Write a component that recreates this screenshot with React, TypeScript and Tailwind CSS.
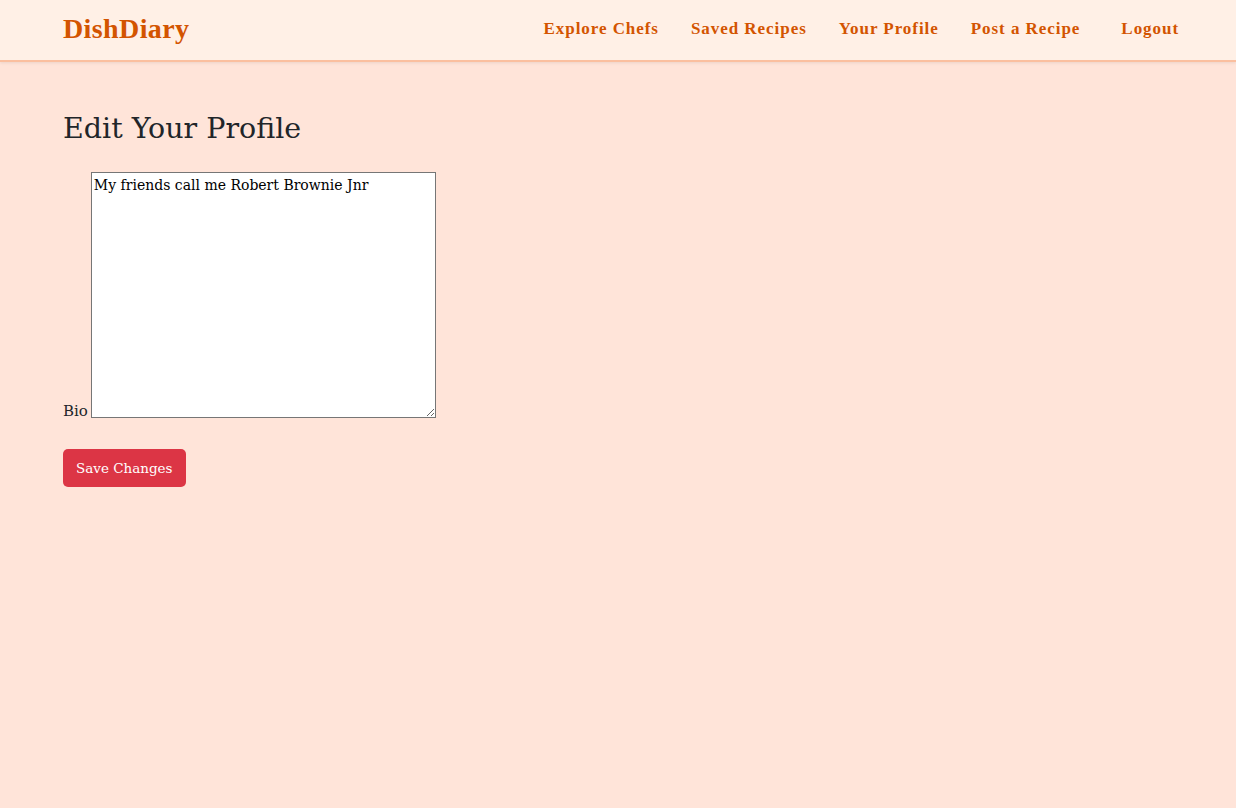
import React from "react";

export default function App() {
  const serif = { fontFamily: '"DejaVu Serif", Georgia, serif' };
  const lib = { fontFamily: '"Liberation Serif", serif' };
  return (
    <div className="min-h-[808px] bg-[#ffe4d9]" style={serif}>
      <nav className="h-[62px] bg-[#fff0e6] border-b-2 border-[#fbbf9f] shadow-[0_1px_3px_rgba(0,0,0,0.08)]">
        <div className="h-full px-[63px] pb-[2px] flex items-center justify-between">
          <span className="text-[28px] font-bold text-[#d35400] tracking-[0.4px]" style={lib}>
            DishDiary
          </span>
          <div className="flex items-center text-[17px] font-bold text-[#d35400] tracking-[0.95px]" style={lib}>
            <a className="mr-[32px]">Explore Chefs</a>
            <a className="mr-[32px]">Saved Recipes</a>
            <a className="mr-[32px]">Your Profile</a>
            <a className="mr-[41px]">Post a Recipe</a>
            <a className="mr-[-6px]">Logout</a>
          </div>
        </div>
      </nav>
      <main className="px-[63px] pt-[48px]">
        <h2 className="text-[28.5px] leading-[38px] text-[#212529] mb-[24px]">Edit Your Profile</h2>
        <form>
          <div className="flex items-end">
            <label className="text-[15px] text-[#212529] mr-[3px] leading-[12px] mb-[1px]">Bio</label>
            <textarea
              defaultValue="My friends call me Robert Brownie Jnr"
              className="w-[345px] h-[246px] bg-white border border-[#767676] px-[2px] py-[3px] text-[14px] leading-[18px] text-black resize-y"
              style={serif}
            />
          </div>
          <button
            type="button"
            className="mt-[31px] h-[38px] px-[13px] rounded-[5px] bg-[#dc3545] text-white text-[13.5px]"
            style={serif}
          >
            Save Changes
          </button>
        </form>
      </main>
    </div>
  );
}
